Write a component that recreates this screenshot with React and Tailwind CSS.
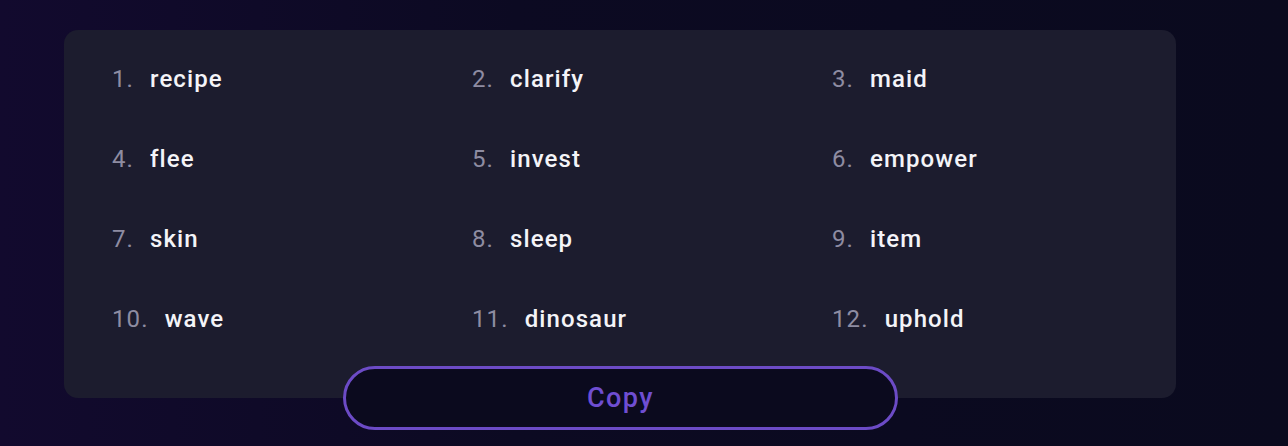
import React from "react";

const words = ["recipe","clarify","maid","flee","invest","empower","skin","sleep","item","wave","dinosaur","uphold"];

export default function App() {
  return (
    <div className="w-[1288px] h-[446px] overflow-hidden bg-[linear-gradient(90deg,#120a2e_0%,#0c0a22_40%,#0a0a1e_100%)] pt-[30px] pl-[64px]" style={{ fontFamily: "Roboto, 'Liberation Sans', sans-serif" }}>
      <div className="relative w-[1112px] h-[368px] rounded-[14px] bg-[#1c1c2e] pl-[48px] pt-[31px]">
        <div className="grid grid-cols-[360px_360px_1fr] auto-rows-[80px]">
          {words.map((w, i) => (
            <div key={i} className="flex items-start text-[24px] leading-[36px] tracking-[1.1px]">
              <span className="text-[#8e8ca2] mr-[16px] font-normal">{i + 1}.</span>
              <span className="text-[#f4f4f8] font-medium">{w}</span>
            </div>
          ))}
        </div>
        <div className="absolute left-[279px] top-[336px] w-[555px] h-[64px] rounded-full border-[3px] border-[#6c4bc6] bg-[#0b0a1e] flex items-center justify-center">
          <span className="text-[#6f4ed2] text-[27px] tracking-[1.5px] font-medium">Copy</span>
        </div>
      </div>
    </div>
  );
}
